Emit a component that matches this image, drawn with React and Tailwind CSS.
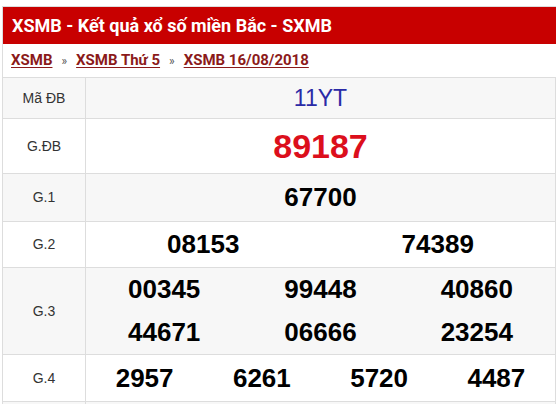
const rows = [
  { label: 'G.1', h: 'h-[48px]', bg: 'bg-[#f7f7f7]', cols: 'grid-cols-1', nums: ['67700'] },
  { label: 'G.2', h: 'h-[46px]', bg: 'bg-white', cols: 'grid-cols-2', nums: ['08153', '74389'] },
  { label: 'G.3', h: 'h-[87px]', bg: 'bg-[#f7f7f7]', cols: 'grid-cols-3', nums: ['00345', '99448', '40860', '44671', '06666', '23254'] },
  { label: 'G.4', h: 'h-[47px]', bg: 'bg-white', cols: 'grid-cols-4', nums: ['2957', '6261', '5720', '4487'] },
];

const Label = ({ children }) => (
  <div className="w-[83px] shrink-0 border-r border-[#ddd] flex items-center justify-center text-[14px] text-[#333]">
    {children}
  </div>
);

export default function App() {
  return (
    <div className="w-[556px] h-[404px] overflow-hidden bg-white pt-[6px] pl-[2px] font-['Liberation_Sans',Arial,sans-serif]">
      <div className="w-[560px] border-l border-t border-[#ddd]">
        {/* Header */}
        <div className="h-[37px] bg-[#c80000] flex items-center pl-[9px]">
          <h1 className="font-['Roboto',sans-serif] font-bold text-[18px] text-white">
            XSMB - Kết quả xổ số miền Bắc - SXMB
          </h1>
        </div>

        {/* Breadcrumb */}
        <div className="h-[33px] flex items-center pl-[8px] font-['Roboto',sans-serif] text-[15px]">
          <a className="font-bold text-[#8b1a1a] underline underline-offset-2">XSMB</a>
          <span className="mx-[9px] text-[12px] text-[#555]">»</span>
          <a className="font-bold text-[#8b1a1a] underline underline-offset-2">XSMB Thứ 5</a>
          <span className="mx-[9px] text-[12px] text-[#555]">»</span>
          <a className="font-bold text-[#8b1a1a] underline underline-offset-2">XSMB 16/08/2018</a>
        </div>

        {/* Results table */}
        <div className="w-[553px] border-r border-[#ddd]">
          <div className="flex h-[41px] border-t border-[#ddd] bg-[#f7f7f7]">
            <Label>Mã ĐB</Label>
            <div className="flex-1 flex items-center justify-center text-[23px] text-[#2a2aa6]">11YT</div>
          </div>
          <div className="flex h-[55px] border-t border-[#ddd] bg-white">
            <Label>G.ĐB</Label>
            <div className="flex-1 flex items-center justify-center text-[34px] font-bold text-[#dc0f1c]">89187</div>
          </div>
          {rows.map((r) => (
            <div key={r.label} className={`flex border-t border-[#ddd] ${r.h} ${r.bg}`}>
              <Label>{r.label}</Label>
              <div className={`flex-1 grid ${r.cols} content-center`}>
                {r.nums.map((n, i) => (
                  <div key={i} className="h-[43px] flex items-center justify-center text-[26px] font-bold text-black">
                    {n}
                  </div>
                ))}
              </div>
            </div>
          ))}
          <div className="flex h-[10px] border-t border-[#ddd] bg-[#f7f7f7]">
            <Label />
            <div className="flex-1" />
          </div>
        </div>
      </div>
    </div>
  );
}
